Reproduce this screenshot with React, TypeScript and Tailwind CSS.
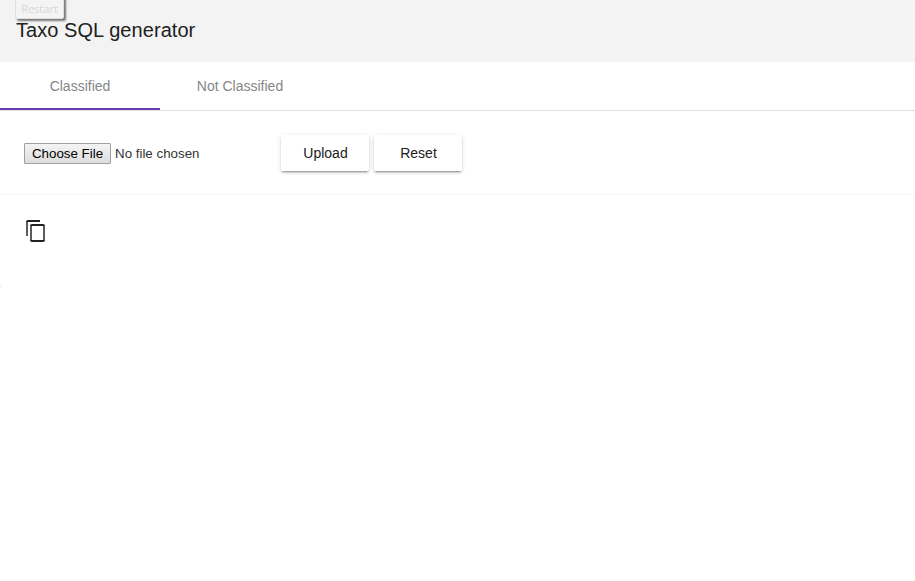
function CopyIcon() {
  return (
    <svg width="24" height="24" viewBox="0 0 24 24" fill="none" aria-hidden="true">
      <path
        fill="#212121"
        d="M16 1H4c-1.1 0-2 .9-2 2v14h2V3h12V1zm3 4H8c-1.1 0-2 .9-2 2v14c0 1.1.9 2 2 2h11c1.1 0 2-.9 2-2V7c0-1.1-.9-2-2-2zm0 16H8V7h11v14z"
      />
      <path d="M3 3V17M7 7V21M20 7V21" stroke="#5c5c5c" strokeWidth="2" />
    </svg>
  );
}

const raised =
  "h-9 w-[88px] rounded-[2px] bg-white pl-px text-center text-[14px] leading-9 text-[#212121] shadow-[0_3px_1px_-2px_rgba(0,0,0,0.2),0_2px_2px_0_rgba(0,0,0,0.14),0_1px_5px_0_rgba(0,0,0,0.12)]";

export default function App() {
  return (
    <div className="relative min-h-screen overflow-hidden bg-white font-['Liberation_Sans',Arial,sans-serif] text-[#212121]">
      <header className="flex h-[62px] items-center bg-[#f3f3f3] px-4">
        <h1 className="pb-0.5 text-[20px] leading-6 tracking-[0.06px] whitespace-nowrap">
          Taxo SQL generator
        </h1>
      </header>
      <div className="absolute -top-1 left-[15px] flex h-[23px] w-[49px] items-end justify-center rounded-[2px] border border-[#dedede] bg-[#f4f4f4] pb-px font-['Open_Sans',sans-serif] text-[11px] leading-4 text-[#d6d6d6] shadow-[2px_2px_2px_rgba(0,0,0,0.5)]">
        Restart
      </div>
      <nav className="flex h-[49px] border-b border-[#dedede] text-[14px] text-[#868686]">
        <button className="h-12 w-40 border-b-2 border-[#673ab7] pt-0.5">Classified</button>
        <button className="h-12 w-40">Not Classified</button>
      </nav>
      <section className="flex h-[84px] items-center border-b border-[#f5f5f5] pl-6">
        <div className="flex w-[257px] items-center gap-1 pt-px text-[13.333px]">
          <button className="h-[21px] w-[87px] rounded-[1px] border border-[#a0a0a0] bg-linear-to-b from-[#f4f4f4] to-[#dddddd] text-center leading-[19px] whitespace-nowrap text-black">
            Choose File
          </button>
          <span className="leading-[21px] whitespace-nowrap text-[#333333]">No file chosen</span>
        </div>
        <div className="flex gap-[5px]">
          <button className={raised}>Upload</button>
          <button className={raised}>Reset</button>
        </div>
      </section>
      <section className="h-[91px] pt-6 pl-6">
        <button className="block" aria-label="Copy">
          <CopyIcon />
        </button>
      </section>
      <div className="h-px w-0.5 bg-[#e6e6e6]" />
    </div>
  );
}
